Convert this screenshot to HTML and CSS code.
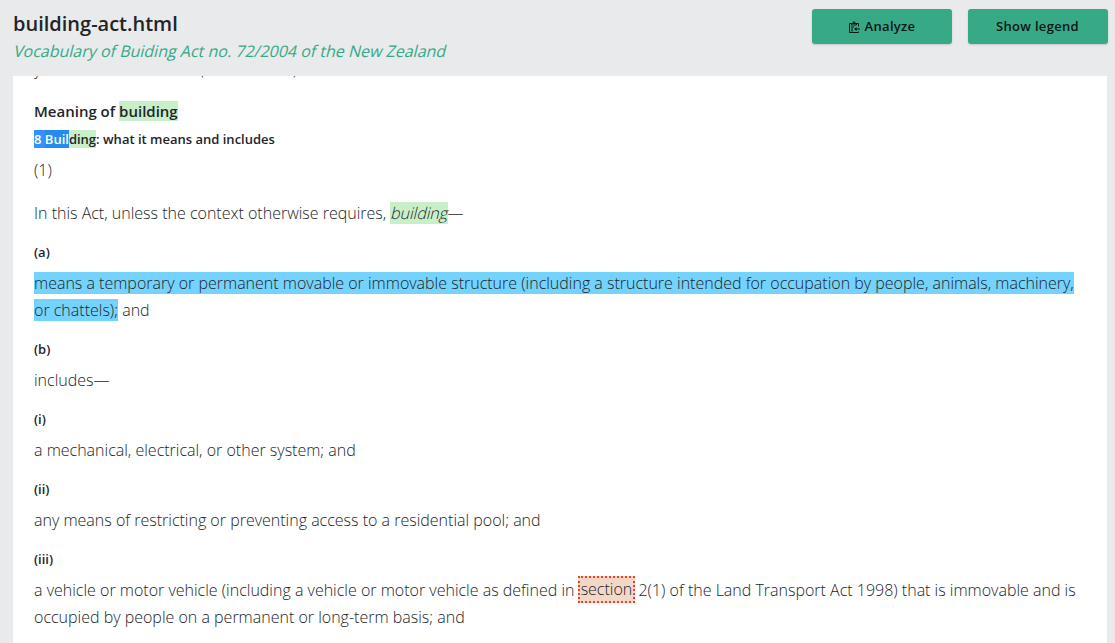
FILE: index.html
```html
<!DOCTYPE html>
<html lang="en">
<head>
<meta charset="utf-8">
<title>building-act.html</title>
<link rel="stylesheet" href="styles.css">
</head>
<body>
<header class="top">
  <div class="titles">
    <h1 class="title">building-act.html</h1>
    <p class="subtitle">Vocabulary of Buiding Act no. 72/2004 of the New Zealand</p>
  </div>
  <div class="actions">
    <button class="btn"><svg class="icon" viewBox="0 0 12 12" fill="none" stroke="currentColor"><path d="M10.500 5.500V2.500H1.500v9h9V10.500M3.500 2.500v1.500h5V2.500M4.500 2.500l1.500-2 1.500 2M3 6h3M3 8h2M3 9.800h2M12 8H7"/><path d="M6 8l2.500-2v4z" fill="currentColor" stroke="none"/></svg>Analyze</button>
    <button class="btn">Show legend</button>
  </div>
</header>
<main class="doc">
  <p class="text cut">years before the dates (as amended)</p>
  <h2 class="heading">Meaning of <span class="term">building</span></h2>
  <h3 class="section"><span class="selected">8 </span><span class="selected selected-term">Buil</span><span class="term">ding</span>: what it means and includes</h3>
  <p class="text">(1)</p>
  <p class="text">In this Act, unless the context otherwise requires, <span class="term"><em class="slanted">building</em></span>—</p>
  <h4 class="label">(a)</h4>
  <p class="text"><span class="definition">means a temporary or permanent movable or immovable structure (including a structure intended for occupation by people, animals, machinery, or chattels);</span> and</p>
  <h4 class="label">(b)</h4>
  <p class="text">includes—</p>
  <h4 class="label">(i)</h4>
  <p class="text">a mechanical, electrical, or other system; and</p>
  <h4 class="label">(ii)</h4>
  <p class="text">any means of restricting or preventing access to a residential pool; and</p>
  <h4 class="label">(iii)</h4>
  <p class="text">a vehicle or motor vehicle (including a vehicle or motor vehicle as defined in <span class="suggestion">section</span> 2(1) of the Land Transport Act 1998) that is immovable and is occupied by people on a permanent or long-term basis; and</p>
</main>
</body>
</html>
```
FILE: styles.css
```css
* { box-sizing: border-box; }
body { margin: 0; height: 643px; overflow: hidden; background: #e8eaec; color: #212529; font-family: "Open Sans", sans-serif; display: flex; flex-direction: column; }
h1, h2, h3, h4, p { margin: 0; }
.top { flex: none; height: 76px; padding: 9px 7px 0 13px; display: flex; justify-content: space-between; align-items: flex-start; }
.title { font-size: 20px; line-height: 30px; font-weight: 600; }
.subtitle { width: max-content; font-size: 16px; line-height: 24px; color: #35a987; transform: skewX(-14deg); transform-origin: 0 75%; }
.actions { display: flex; gap: 16px; }
.btn { width: 140px; height: 35px; padding: 0 1px 1px 0; border: 0; border-radius: 3px; background: #37a987; color: #0c1512; font: 600 13px "Open Sans", sans-serif; letter-spacing: .3px; display: flex; align-items: center; justify-content: center; gap: 5px; box-shadow: 0 1px 2px rgba(0,0,0,.15); }
.icon { width: 12px; height: 12px; margin-top: 2px; }
.doc { flex: 1; min-height: 0; overflow: hidden; margin: 0 8px 0 13px; padding: 0 21px; background: #fff; }
.text { font-size: 16px; line-height: 27px; font-weight: 300; margin-bottom: 16px; }
.cut { margin-top: -20px; margin-bottom: 17px; }
.heading { font-size: 15px; line-height: 22px; font-weight: 600; margin-bottom: 8px; }
.section { font-size: 13px; line-height: 18px; font-weight: 600; margin-bottom: 9px; }
.label { font-size: 13px; line-height: 18px; font-weight: 600; margin-bottom: 9px; }
.term { background: #c9efc9; }
.slanted { display: inline-block; font-style: normal; line-height: 20px; transform: skewX(-14deg); transform-origin: 0 80%; }
.selected { background: #3390ff; color: #fff; }
.selected-term { background: #248cec; }
.definition { background: #74d3fc; }
.suggestion { display: inline-block; line-height: 23px; vertical-align: 1px; margin: -3px -.5px; padding: 0 .5px; background: #f3d8c9; border: 2px dotted #f04020; }
```
